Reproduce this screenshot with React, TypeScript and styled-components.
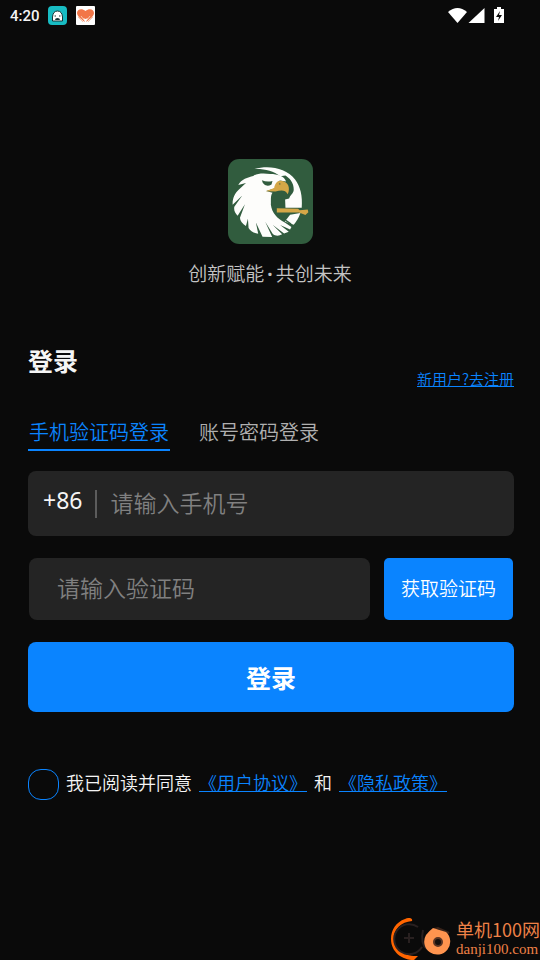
import React, { useState } from "react";
import styled, { createGlobalStyle } from "styled-components";

const BLUE = "#0a84ff";

const GlobalStyle = createGlobalStyle`
  * { box-sizing: border-box; }
  body {
    margin: 0;
    background: #0a0a0a;
    color: #f5f5f5;
    font-family: "Noto Sans CJK SC", sans-serif;
  }
  button, input { font-family: inherit; }
  h1, p { margin: 0; }
`;

const Screen = styled.div`
  min-height: 100vh;
  display: flex;
  flex-direction: column;
`;

const StatusBar = styled.header`
  display: flex;
  align-items: center;
  justify-content: space-between;
  height: 31px;
  padding: 0 35px 0 10px;
`;

const StatusGroup = styled.div`
  display: flex;
  align-items: center;
  gap: 8px;
`;

const Clock = styled.span`
  font: 500 15px/20px Roboto, sans-serif;
`;

const Brand = styled.section`
  display: flex;
  flex-direction: column;
  align-items: center;
  gap: 15px;
  padding-top: 128px;
`;

const Slogan = styled.p`
  font-size: 19px;
  line-height: 28px;
  font-weight: 350;
  color: #c4c4c4;
`;

const Dot = styled.span`
  padding: 0 3px;
  font-family: "Noto Sans", sans-serif;
  font-weight: 700;
`;

const Main = styled.main`
  padding: 54px 26px 0 28px;
`;

const TitleRow = styled.div`
  display: flex;
  align-items: flex-end;
  justify-content: space-between;
`;

const Title = styled.h1`
  font-size: 25px;
  line-height: 36px;
  font-weight: 700;
  padding-bottom: 9px;
`;

const Link = styled.a<{ $size: number }>`
  color: ${BLUE};
  font-size: ${(p) => p.$size}px;
  line-height: ${(p) => p.$size}px;
  font-weight: 350;
  text-decoration: none;
  border-bottom: 1px solid ${BLUE};
`;

const Tabs = styled.div`
  display: flex;
  gap: 28px;
  margin-top: 30px;
`;

const Tab = styled.button<{ $active: boolean }>`
  padding: 0 1px 2px;
  border: 0;
  border-bottom: 2px solid ${(p) => (p.$active ? BLUE : "transparent")};
  background: none;
  color: ${(p) => (p.$active ? BLUE : "#b0b0b0")};
  font-size: 20px;
  line-height: 30px;
  font-weight: 350;
`;

const Field = styled.div`
  display: flex;
  align-items: center;
  flex: 1;
  min-width: 0;
  border-radius: 8px;
  background: #242424;
`;

const PhoneField = styled(Field)`
  height: 65px;
  margin-top: 20px;
  padding: 0 15px;
`;

const CodeField = styled(Field)`
  padding: 0 28px;
`;

const Prefix = styled.span`
  font: 400 23px/32px "Noto Sans", sans-serif;
  padding: 0 13px 8px 0;
`;

const Divider = styled.span`
  width: 2px;
  height: 28px;
  margin-right: 13px;
  background: #5c5c5c;
`;

const Input = styled.input`
  flex: 1;
  min-width: 0;
  height: 40px;
  padding: 0 0 4px;
  border: 0;
  outline: 0;
  background: none;
  color: #f5f5f5;
  font-size: 23px;
  font-weight: 350;
  &::placeholder { color: #808080; opacity: 1; }
`;

const CodeRow = styled.div`
  display: flex;
  gap: 14px;
  height: 62px;
  margin: 22px 1px;
`;

const CodeButton = styled.button`
  width: 129px;
  padding: 0 0 4px;
  border: 0;
  border-radius: 5px;
  background: ${BLUE};
  color: #fff;
  font-size: 19px;
  font-weight: 350;
`;

const SubmitButton = styled.button`
  width: 100%;
  height: 70px;
  padding: 0;
  border: 0;
  border-radius: 8px;
  background: ${BLUE};
  color: #fff;
  font-size: 25px;
  font-weight: 700;
`;

const Agreement = styled.div`
  display: flex;
  align-items: center;
  gap: 7px;
  margin-top: 56px;
`;

const Terms = styled.div`
  display: flex;
  align-items: center;
  gap: 7px;
  padding-bottom: 4px;
  font-size: 18px;
  line-height: 28px;
  font-weight: 350;
`;

const Check = styled.input`
  appearance: none;
  flex: none;
  width: 31px;
  height: 31px;
  margin: 0;
  border: 1px solid ${BLUE};
  border-radius: 13px;
  &:checked { background: ${BLUE}; }
`;

const Watermark = styled.footer`
  display: flex;
  align-items: flex-end;
  justify-content: flex-end;
  gap: 3px;
  margin-top: auto;
`;

const SiteName = styled.div`
  display: flex;
  flex-direction: column;
  padding-bottom: 2px;
  color: #ee8147;
`;

const SiteTitle = styled.span`
  font-size: 18px;
  line-height: 24px;
`;

const SiteAddress = styled.span`
  font: 400 15px/17px "Liberation Serif", serif;
`;

const RobotIcon = () => (
  <svg width="20" height="20" viewBox="0 0 20 20" aria-hidden="true">
    <rect width="19" height="19" rx="4" fill="#18bcc3" />
    <path d="M4.500 15V11Q5 5 9.500 5T14.500 11V15Z" fill="#fff" stroke="#173437" />
    <path d="M6.500 10H8M11 10H12.500" stroke="#173437" strokeWidth="1" />
    <path d="M7 14Q7 12 9.500 12T12 14Z" fill="#173437" />
  </svg>
);

const HeartIcon = () => (
  <svg width="19" height="19" viewBox="0 0 19 19" aria-hidden="true">
    <rect width="19" height="19" rx="1" fill="#fff" />
    <path d="M9 16C6 14 1 10 1 7C1 3 6 2 9.500 5C13 2 18 3 18 7C18 10 13 14 10 16L12 12L9.500 13L7 12Z" fill="#f27648" />
    <path d="M2 11L7 16M17 11L12 16M5 10L8 14M14 10L11 14" stroke="#f8c6ae" fill="none" />
  </svg>
);

const SignalIcons = () => (
  <svg width="57" height="20" viewBox="0 0 57 20" fill="#fff" aria-hidden="true">
    <path d="M0 6Q9.500 -2 19 6L9.500 17Z" />
    <path d="M36.500 2V17H20.500Z" />
    <path d="M46 3H49V1H53V3H56V17H46Z" />
    <path d="M52 5L48 11H51L50 15L54 9H51Z" fill="#0a0a0a" />
  </svg>
);

const EagleLogo = () => (
  <svg width="85" height="85" viewBox="24 27 256 256" role="img" aria-label="logo">
    <rect x="24" y="27" width="256" height="256" rx="34" fill="#315c3e" />
    <g fill="#fdfdfb">
      <path d="M104 57C146 45 199 53 226 89C242 110 249 139 246 174L197 174L196 149L208 146C212 133 220 133 222 120C223 98 208 84 197 77L181 79C162 62 133 56 104 57Z" />
      <path d="M55 105C64 88 84 82 100 78C112 70 130 69 151 72C174 72 194 78 199 95L180 92L169 101L166 115L139 123L158 129C151 139 154 153 153 164C156 190 173 207 195 218L215 232L211 239L181 226L207 246L193 251L158 225L187 254C177 260 166 259 159 253L136 216L157 262L128 261L108 218L115 252Q94 249 86 235L84 207L78 229C68 222 60 213 60 204L75 163L53 198C45 190 41 181 43 171L67 137L38 165C37 148 43 131 57 119L78 99Z" />
      <path d="M242 190C237 205 230 216 222 225L195 215L211 195Z" />
    </g>
    <path d="M126 91Q142 98 158 93L155 104Q139 113 129 99Z" fill="#315c3e" />
    <path d="M138 124L163 114C166 99 174 90 187 93C204 96 213 111 204 133C196 119 184 121 167 125Z" fill="#d5a747" />
    <path d="M171 175L235 177L240 181L264 179L266 187L257 196L246 191L237 188L171 188Z" fill="#d5a747" />
    <circle cx="180" cy="102" r="2" fill="#315c3e" />
    <path d="M197 211L214 223" stroke="#315c3e" strokeWidth="4" />
  </svg>
);

const SiteLogo = () => (
  <svg width="62" height="42" viewBox="0 0 62 42" fill="none" aria-hidden="true">
    <path d="M21 3C22 0 18 -1 14 1C5 4 0 12 0 21C0 34 11 42 23 42L27 38C14 39 3 31 3 20C3 11 10 4 21 3Z" fill="#ff6500" />
    <path d="M27 9A15 15 0 1 0 31 29M32 12Q29 26 36 31M18 15V25M13 20H23" stroke="#282020" strokeWidth="2" />
    <path d="M43 11L47 10L58 15" stroke="#3b241a" strokeWidth="2" />
    <path d="M42 10L55 14A13 13 0 1 1 35 17Q38 13 42 10Z" fill="#ff944f" />
    <circle cx="47" cy="24" r="4" fill="#15100e" stroke="#5b3524" strokeWidth="2" />
  </svg>
);

export default function App() {
  const [tab, setTab] = useState<"phone" | "account">("phone");
  return (
    <Screen>
      <GlobalStyle />
      <StatusBar>
        <StatusGroup>
          <Clock>4:20</Clock>
          <RobotIcon />
          <HeartIcon />
        </StatusGroup>
        <SignalIcons />
      </StatusBar>
      <Brand>
        <EagleLogo />
        <Slogan>创新赋能<Dot>·</Dot>共创未来</Slogan>
      </Brand>
      <Main>
        <TitleRow>
          <Title>登录</Title>
          <Link $size={15} href="#register">新用户?去注册</Link>
        </TitleRow>
        <Tabs role="tablist">
          <Tab role="tab" aria-selected={tab === "phone"} $active={tab === "phone"} onClick={() => setTab("phone")}>手机验证码登录</Tab>
          <Tab role="tab" aria-selected={tab === "account"} $active={tab === "account"} onClick={() => setTab("account")}>账号密码登录</Tab>
        </Tabs>
        <PhoneField>
          <Prefix>+86</Prefix>
          <Divider />
          <Input type="tel" aria-label="手机号" placeholder="请输入手机号" />
        </PhoneField>
        <CodeRow>
          <CodeField>
            <Input type="text" aria-label="验证码" placeholder="请输入验证码" />
          </CodeField>
          <CodeButton>获取验证码</CodeButton>
        </CodeRow>
        <SubmitButton>登录</SubmitButton>
        <Agreement>
          <Check type="checkbox" id="agree" />
          <Terms>
            <label htmlFor="agree">我已阅读并同意</label>
            <Link $size={18} href="#terms">《用户协议》</Link>
            <span>和</span>
            <Link $size={18} href="#privacy">《隐私政策》</Link>
          </Terms>
        </Agreement>
      </Main>
      <Watermark>
        <SiteLogo />
        <SiteName>
          <SiteTitle>单机100网</SiteTitle>
          <SiteAddress>danji100.com</SiteAddress>
        </SiteName>
      </Watermark>
    </Screen>
  );
}
